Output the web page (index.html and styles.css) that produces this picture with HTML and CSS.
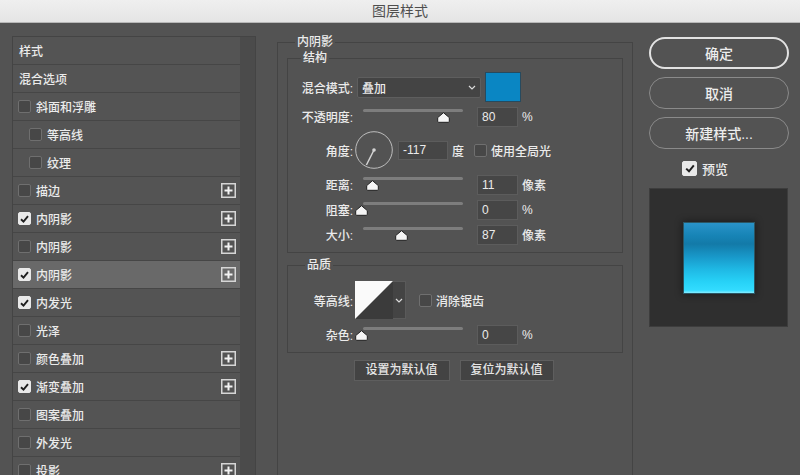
FILE: index.html
```html
<!DOCTYPE html>
<html lang="zh-CN">
<head>
<meta charset="utf-8">
<title>图层样式</title>
<link rel="stylesheet" href="styles.css">
</head>
<body>
<div class="titlebar">图层样式</div>
<div class="main">
  <div class="styles-panel">
    <div class="style-rows">
      <div class="row plain">样式</div>
      <div class="row plain">混合选项</div>
      <div class="row"><span class="cb"></span><span class="name">斜面和浮雕</span></div>
      <div class="row indent"><span class="cb"></span><span class="name">等高线</span></div>
      <div class="row indent"><span class="cb"></span><span class="name">纹理</span></div>
      <div class="row"><span class="cb"></span><span class="name">描边</span><svg class="plus" width="15" height="15" viewBox="0 0 15 15"><rect x="0.75" y="0.75" width="13.5" height="13.5" fill="none" stroke="#d6d6d6" stroke-width="1.5"/><path d="M7.5 3.5V11.5M3.5 7.5H11.5" stroke="#f2f2f2" stroke-width="2"/></svg></div>
      <div class="row"><span class="cb on"><svg width="9" height="8" viewBox="0 0 9 8"><path d="M1 4.2L3.5 6.6L8 1.2" fill="none" stroke="#1f1f1f" stroke-width="1.9"/></svg></span><span class="name">内阴影</span><svg class="plus" width="15" height="15" viewBox="0 0 15 15"><rect x="0.75" y="0.75" width="13.5" height="13.5" fill="none" stroke="#d6d6d6" stroke-width="1.5"/><path d="M7.5 3.5V11.5M3.5 7.5H11.5" stroke="#f2f2f2" stroke-width="2"/></svg></div>
      <div class="row"><span class="cb"></span><span class="name">内阴影</span><svg class="plus" width="15" height="15" viewBox="0 0 15 15"><rect x="0.75" y="0.75" width="13.5" height="13.5" fill="none" stroke="#d6d6d6" stroke-width="1.5"/><path d="M7.5 3.5V11.5M3.5 7.5H11.5" stroke="#f2f2f2" stroke-width="2"/></svg></div>
      <div class="row active"><span class="cb on"><svg width="9" height="8" viewBox="0 0 9 8"><path d="M1 4.2L3.5 6.6L8 1.2" fill="none" stroke="#1f1f1f" stroke-width="1.9"/></svg></span><span class="name">内阴影</span><svg class="plus" width="15" height="15" viewBox="0 0 15 15"><rect x="0.75" y="0.75" width="13.5" height="13.5" fill="none" stroke="#d6d6d6" stroke-width="1.5"/><path d="M7.5 3.5V11.5M3.5 7.5H11.5" stroke="#f2f2f2" stroke-width="2"/></svg></div>
      <div class="row"><span class="cb on"><svg width="9" height="8" viewBox="0 0 9 8"><path d="M1 4.2L3.5 6.6L8 1.2" fill="none" stroke="#1f1f1f" stroke-width="1.9"/></svg></span><span class="name">内发光</span></div>
      <div class="row"><span class="cb"></span><span class="name">光泽</span></div>
      <div class="row"><span class="cb"></span><span class="name">颜色叠加</span><svg class="plus" width="15" height="15" viewBox="0 0 15 15"><rect x="0.75" y="0.75" width="13.5" height="13.5" fill="none" stroke="#d6d6d6" stroke-width="1.5"/><path d="M7.5 3.5V11.5M3.5 7.5H11.5" stroke="#f2f2f2" stroke-width="2"/></svg></div>
      <div class="row"><span class="cb on"><svg width="9" height="8" viewBox="0 0 9 8"><path d="M1 4.2L3.5 6.6L8 1.2" fill="none" stroke="#1f1f1f" stroke-width="1.9"/></svg></span><span class="name">渐变叠加</span><svg class="plus" width="15" height="15" viewBox="0 0 15 15"><rect x="0.75" y="0.75" width="13.5" height="13.5" fill="none" stroke="#d6d6d6" stroke-width="1.5"/><path d="M7.5 3.5V11.5M3.5 7.5H11.5" stroke="#f2f2f2" stroke-width="2"/></svg></div>
      <div class="row"><span class="cb"></span><span class="name">图案叠加</span></div>
      <div class="row"><span class="cb"></span><span class="name">外发光</span></div>
      <div class="row"><span class="cb"></span><span class="name">投影</span><svg class="plus" width="15" height="15" viewBox="0 0 15 15"><rect x="0.75" y="0.75" width="13.5" height="13.5" fill="none" stroke="#d6d6d6" stroke-width="1.5"/><path d="M7.5 3.5V11.5M3.5 7.5H11.5" stroke="#f2f2f2" stroke-width="2"/></svg></div>
    </div>
    <div class="scroll-strip"></div>
  </div>

  <fieldset class="group outer">
    <legend>内阴影</legend>
    <fieldset class="group structure">
      <legend>结构</legend>
      <div class="frow blend-row">
        <span class="lbl">混合模式:</span>
        <div class="select"><span>叠加</span><svg width="8" height="5" viewBox="0 0 8 5"><path d="M1 1L4 4L7 1" fill="none" stroke="#dcdcdc" stroke-width="1.2"/></svg></div>
        <div class="swatch"></div>
      </div>
      <div class="frow slider-row first">
        <span class="lbl">不透明度:</span>
        <div class="slider"><div class="track"></div><svg class="thumb" style="margin-left:74px" width="13" height="11" viewBox="0 0 13 11"><path d="M6.5 0.7L12.3 5.6V9.4Q12.3 10.3 11.4 10.3H1.6Q0.7 10.3 0.7 9.4V5.6Z" fill="#f5f5f5" stroke="#202020" stroke-width="1"/></svg></div>
        <div class="field">80</div>
        <span class="unit">%</span>
      </div>
      <div class="frow angle-row">
        <span class="lbl">角度:</span>
        <svg class="dial" width="38" height="38" viewBox="0 0 38 38"><circle cx="19" cy="19" r="18.3" fill="none" stroke="#bdbdbd" stroke-width="1"/><path d="M19 19L11.4 34" stroke="#d4d4d4" stroke-width="1.5"/><circle cx="19" cy="19" r="1.8" fill="#d4d4d4"/></svg>
        <div class="field angle-field">-117</div>
        <span class="deg">度</span>
        <span class="cb"></span><span>使用全局光</span>
      </div>
      <div class="frow slider-row after-angle">
        <span class="lbl">距离:</span>
        <div class="slider"><div class="track"></div><svg class="thumb" style="margin-left:3px" width="13" height="11" viewBox="0 0 13 11"><path d="M6.5 0.7L12.3 5.6V9.4Q12.3 10.3 11.4 10.3H1.6Q0.7 10.3 0.7 9.4V5.6Z" fill="#f5f5f5" stroke="#202020" stroke-width="1"/></svg></div>
        <div class="field">11</div>
        <span class="unit">像素</span>
      </div>
      <div class="frow slider-row">
        <span class="lbl">阻塞:</span>
        <div class="slider"><div class="track"></div><svg class="thumb" style="margin-left:-8px" width="13" height="11" viewBox="0 0 13 11"><path d="M6.5 0.7L12.3 5.6V9.4Q12.3 10.3 11.4 10.3H1.6Q0.7 10.3 0.7 9.4V5.6Z" fill="#f5f5f5" stroke="#202020" stroke-width="1"/></svg></div>
        <div class="field">0</div>
        <span class="unit">%</span>
      </div>
      <div class="frow slider-row">
        <span class="lbl">大小:</span>
        <div class="slider"><div class="track"></div><svg class="thumb" style="margin-left:32px" width="13" height="11" viewBox="0 0 13 11"><path d="M6.5 0.7L12.3 5.6V9.4Q12.3 10.3 11.4 10.3H1.6Q0.7 10.3 0.7 9.4V5.6Z" fill="#f5f5f5" stroke="#202020" stroke-width="1"/></svg></div>
        <div class="field">87</div>
        <span class="unit">像素</span>
      </div>
    </fieldset>

    <fieldset class="group quality">
      <legend>品质</legend>
      <div class="frow contour-row">
        <span class="lbl">等高线:</span>
        <div class="contour">
          <svg width="38" height="38" viewBox="0 0 38 38"><rect width="38" height="38" fill="#3b3b3b"/><polygon points="0,0 38,0 0,38" fill="#fafafa"/></svg>
          <div class="contour-drop"><svg width="8" height="5" viewBox="0 0 8 5"><path d="M1 1L4 4L7 1" fill="none" stroke="#dcdcdc" stroke-width="1.2"/></svg></div>
        </div>
        <span class="cb"></span><span>消除锯齿</span>
      </div>
      <div class="frow slider-row noise-row">
        <span class="lbl">杂色:</span>
        <div class="slider"><div class="track"></div><svg class="thumb" style="margin-left:-8px" width="13" height="11" viewBox="0 0 13 11"><path d="M6.5 0.7L12.3 5.6V9.4Q12.3 10.3 11.4 10.3H1.6Q0.7 10.3 0.7 9.4V5.6Z" fill="#f5f5f5" stroke="#202020" stroke-width="1"/></svg></div>
        <div class="field">0</div>
        <span class="unit">%</span>
      </div>
    </fieldset>

    <div class="defaults">
      <div class="dbtn">设置为默认值</div>
      <div class="dbtn narrow">复位为默认值</div>
    </div>
  </fieldset>

  <div class="actions">
    <div class="btn primary">确定</div>
    <div class="btn">取消</div>
    <div class="btn">新建样式...</div>
    <div class="preview-toggle"><span class="cb on big"><svg width="10" height="9" viewBox="0 0 10 9"><path d="M1.2 4.6L4 7.3L8.8 1.4" fill="none" stroke="#1f1f1f" stroke-width="2"/></svg></span><span>预览</span></div>
    <div class="preview"><div class="sample"></div></div>
  </div>
</div>
</body>
</html>
```

FILE: styles.css
```css
* { box-sizing: border-box; }
html, body { margin: 0; padding: 0; }
body {
  width: 800px;
  height: 475px;
  overflow: hidden;
  background: #535353;
  font-family: "Liberation Sans", "Noto Sans CJK SC", sans-serif;
  font-size: 12px;
  font-weight: 500;
  color: #ebebeb;
}
.titlebar {
  height: 23px;
  line-height: 22px;
  text-align: center;
  font-size: 14px;
  font-weight: 400;
  color: #4e4e4e;
  background: linear-gradient(#efefef, #e5e5e5);
  border-bottom: 1px solid #b8b8b8;
}
.main {
  display: flex;
  align-items: flex-start;
  padding: 12px 0 0 12px;
}

/* left styles list */
.styles-panel {
  display: flex;
  width: 244px;
  height: 460px;
  margin-top: 1px;
  border: 1px solid #444444;
  border-bottom: none;
  flex: none;
}
.style-rows { width: 227px; flex: none; }
.scroll-strip { flex: 1; background: #4b4b4b; }
.row {
  height: 28px;
  display: flex;
  align-items: center;
  padding: 0 4px 0 5px;
  background: #545454;
  border-bottom: 1px solid #464646;
  white-space: nowrap;
}
.row.plain { padding-left: 6px; }
.row.indent { padding-left: 16px; }
.row.active { background: #696969; }
.row .name { flex: 1; }
.plus { display: block; flex: none; }

.cb {
  width: 13px;
  height: 13px;
  border: 1px solid #6f6f6f;
  border-radius: 2px;
  background: #474747;
  margin-right: 5px;
  flex: none;
  display: flex;
  align-items: center;
  justify-content: center;
}
.cb.on { background: #e9e9e9; border-color: #e9e9e9; }
.cb svg { display: block; }

/* group boxes */
.group {
  margin: 0;
  padding: 0;
  min-width: 0;
  border: 1px solid #444444;
}
.group > legend {
  font-size: 12px;
  line-height: 14px;
  padding: 0 2px;
  color: #ebebeb;
}
.outer {
  width: 356px;
  height: 470px;
  margin-left: 21px;
  padding: 0 9px;
  flex: none;
}
.outer > legend { margin-left: 8px; }
.structure { margin-top: 2px; padding: 7px 0 5px; }
.structure > legend { margin-left: 13px; }
.quality { margin-top: 5px; padding: 9px 0 5px; }
.quality > legend { margin-left: 17px; }

.frow { display: flex; align-items: center; white-space: nowrap; }
.lbl { width: 65px; text-align: right; flex: none; }

.blend-row { height: 30px; }
.select {
  margin-left: 4px;
  width: 124px;
  height: 21px;
  background: #444444;
  border: 1px solid #5e5e5e;
  border-radius: 2px;
  display: flex;
  align-items: center;
  justify-content: space-between;
  padding: 0 4px 0 4px;
}
.select svg { display: block; }
.swatch {
  margin-left: 4px;
  width: 36px;
  height: 30px;
  background: #0a86c3;
  border: 1px solid #274a5e;
}

.slider-row { height: 25px; }
.slider-row.first { margin-top: 2px; }
.slider-row.after-angle { margin-top: 3px; }
.noise-row { margin-top: 3px; }
.slider {
  margin-left: 10px;
  width: 100px;
  height: 25px;
  padding-top: 5px;
  flex: none;
}
.track { height: 3px; background: #7d7d7d; border-radius: 1.5px; }
.thumb { display: block; }
.field {
  margin-left: 14px;
  width: 41px;
  height: 20px;
  background: #464646;
  border: 1px solid #5c5c5c;
  padding-left: 4px;
  line-height: 18px;
  font-weight: 400;
  flex: none;
}
.unit { margin-left: 4px; }

.angle-row { height: 38px; margin-top: 2px; }
.dial { display: block; margin-left: 2px; flex: none; }
.angle-field { margin-left: 5px; width: 50px; height: 19px; line-height: 17px; }
.deg { margin-left: 4px; }
.angle-row .cb { margin-left: 10px; margin-right: 4px; }

.contour-row { height: 38px; }
.contour { display: flex; margin-left: 2px; flex: none; }
.contour svg { display: block; }
.contour-drop {
  width: 13px;
  height: 38px;
  background: #444444;
  border: 1px solid #5a5a5a;
  border-left: none;
  display: flex;
  align-items: center;
  justify-content: center;
}
.contour-row .cb { margin-left: 13px; margin-right: 4px; }

.defaults {
  display: flex;
  justify-content: center;
  gap: 10px;
  margin-top: 7px;
  padding-right: 3px;
}
.dbtn {
  width: 96px;
  height: 21px;
  background: #434343;
  border: 1px solid #5e5e5e;
  text-align: center;
  line-height: 19px;
  color: #e6e6e6;
}
.dbtn.narrow { width: 94px; }

/* right column */
.actions { margin-left: 16px; width: 140px; margin-top: 2px; flex: none; }
.btn {
  height: 32px;
  border: 1px solid #8a8a8a;
  border-radius: 16px;
  display: flex;
  align-items: center;
  justify-content: center;
  font-size: 14px;
  color: #ededed;
  margin-bottom: 8px;
}
.btn.primary { border: 2px solid #e2e2e2; }
.preview-toggle {
  display: flex;
  align-items: center;
  height: 15px;
  margin-top: 12px;
  padding-left: 33px;
  font-size: 13px;
}
.cb.big { width: 15px; height: 15px; }
.preview {
  margin-top: 12px;
  width: 139px;
  height: 139px;
  background: #2f2f2f;
  border: 1px solid #3d3d3d;
  display: flex;
  align-items: center;
  justify-content: center;
}
.sample {
  width: 70px;
  height: 70px;
  background: linear-gradient(#2a93c9 0%, #1784b6 18%, #137aa8 30%, #1898c9 48%, #1fb8e4 66%, #27d2f7 84%, #33dcff 96%, #86ecff 100%);
  box-shadow: 0 0 0 1px rgba(60, 180, 220, 0.35), 0 0 7px 2px rgba(0, 0, 0, 0.4);
}
```
